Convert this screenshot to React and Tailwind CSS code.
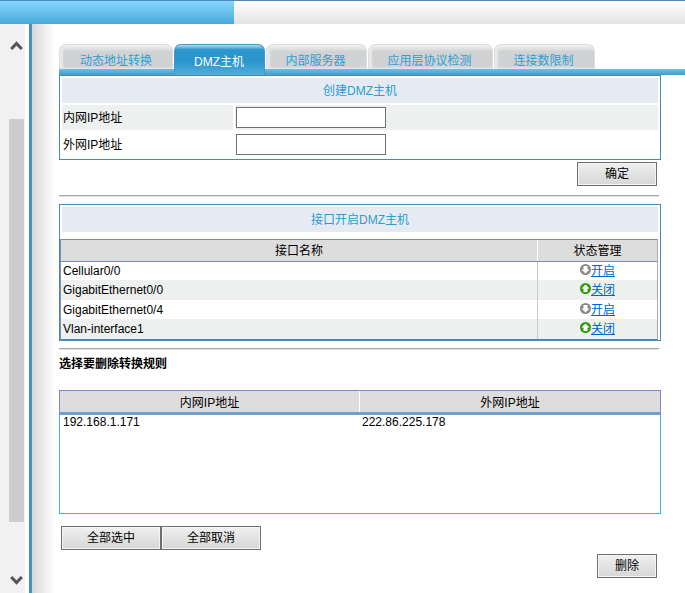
const font = { fontFamily: '"Liberation Sans", "Noto Sans CJK SC", sans-serif' };

const tabs = [
  { label: '动态地址转换', width: 'w-[114px]' },
  { label: 'DMZ主机', width: 'w-[91px]', active: true },
  { label: '内部服务器', width: 'w-[101px]', inset: 'pr-[2px]' },
  { label: '应用层协议检测', width: 'w-[125px]', inset: 'pr-[2px]' },
  { label: '连接数限制', width: 'w-[101px]', inset: 'pr-[2px]' },
];

const interfaces = [
  { name: 'Cellular0/0', on: false, h: 'h-[18px]' },
  { name: 'GigabitEthernet0/0', on: true, h: 'h-[20px]', alt: true },
  { name: 'GigabitEthernet0/4', on: false, h: 'h-[19px]' },
  { name: 'Vlan-interface1', on: true, h: 'h-[20px]', alt: true },
];

function StatusIcon({ on }) {
  return (
    <svg width="11" height="11" viewBox="0 0 11 11" className="shrink-0 -mt-[3px]">
      <circle cx="5.5" cy="5.5" r="5.5" fill={on ? '#2f9a0c' : '#888888'} />
      {on
        ? <path d="M5.5 1.5 L9.5 5.5 H7.5 V9 H3.5 V5.5 H1.5 Z" fill="#fff" />
        : <path d="M5.5 9.5 L9.5 5.5 H7.5 V2 H3.5 V5.5 H1.5 Z" fill="#fff" />}
    </svg>
  );
}

function GrayButton({ children, className = '' }) {
  return (
    <button className={`h-[24px] border border-[#6f6f6f] bg-gradient-to-b from-[#f0f0f0] to-[#d6d6d6] shadow-[inset_0_0_0_1px_#f4f4f4] text-xs text-black ${className}`}>
      {children}
    </button>
  );
}

function PanelTitle({ children }) {
  return (
    <div className="h-[25px] bg-[#e6eaf2] flex items-center justify-center text-xs text-[#2b9dd2]">
      {children}
    </div>
  );
}

function Divider() {
  return <div className="w-[600px] h-[2px] bg-[#a8a8a8] border-b border-[#e4e4e4]" />;
}

export default function App() {
  return (
    <div className="w-[685px] h-[593px] overflow-hidden bg-white flex flex-col" style={font}>
      {/* Top bar */}
      <div className="h-[24px] shrink-0 flex border-t border-[#4f8cbd]">
        <div className="w-[234px] bg-gradient-to-b from-[#85d6fd] to-[#4aa9da]" />
        <div className="flex-1 bg-gradient-to-b from-white to-[#e4e4e4]" />
      </div>

      <div className="flex-1 flex min-h-0">
        {/* Scrollbar */}
        <div className="w-[25px] shrink-0 bg-[#f1f1f1] flex flex-col pl-[9px]">
          <div className="h-[95px] pt-[17px] pr-[1px] flex justify-center">
            <svg width="13" height="9" viewBox="0 0 13 9"><path d="M1.2 8 L6.5 2.4 L11.8 8" fill="none" stroke="#555" strokeWidth="3" /></svg>
          </div>
          <div className="w-[15px] h-[403px] bg-[#cdcdcd]" />
          <div className="h-[71px] pt-[54px] pr-[1px] flex justify-center">
            <svg width="13" height="9" viewBox="0 0 13 9"><path d="M1.2 1 L6.5 6.6 L11.8 1" fill="none" stroke="#555" strokeWidth="3" /></svg>
          </div>
        </div>

        {/* Splitter */}
        <div className="w-[4px] shrink-0 bg-white" />
        <div className="w-[3px] shrink-0 bg-[#4a8fba]" />
        <div className="w-[23px] shrink-0 bg-gradient-to-r from-[#d8d8d8] to-white" />
        <div className="w-[4px] shrink-0" />

        {/* Main */}
        <div className="flex-1 pt-[20px] text-xs text-black">
          {/* Tabs */}
          <div className="relative h-[31px] flex gap-px">
            <div className="absolute left-0 right-0 bottom-0 h-[6px] bg-gradient-to-b from-[#6cc0e8] to-[#3f9ccf]" />
            {tabs.map(t => (
              t.active ? (
                <div key={t.label} className={`relative ${t.width} h-[31px] rounded-t-[7px] border-t border-x border-[#4a97c4] bg-[linear-gradient(to_bottom,#b5dcf0_0%,#2a96cb_16%,#2a96cb_55%,#52aedb_100%)] text-white flex items-center justify-center pt-[3px] pr-[1px]`}>
                  {t.label}
                </div>
              ) : (
                <div key={t.label} className={`relative ${t.width} ${t.inset || ''} h-[25px] rounded-t-[7px] border-t border-x border-[#dedede] bg-[linear-gradient(to_bottom,#f4f4f4_0%,#d0d2d3_28%,#cfd1d2_88%,#e6e6e6_100%)] shadow-[inset_4px_0_2px_-1px_#e9e9e9] text-[#2f9fd6] flex items-center justify-center pt-[7px]`}>
                  {t.label}
                </div>
              )
            ))}
          </div>

          {/* Create DMZ */}
          <div className="w-[602px] border border-[#4a8ab0] p-[2px] flex flex-col gap-[2px]">
            <PanelTitle>创建DMZ主机</PanelTitle>
            <div className="h-[25px] flex gap-[2px]">
              <div className="w-[171px] bg-[#eef0ef] flex items-center pl-[1px]">内网IP地址</div>
              <div className="flex-1 bg-[#eef0ef] flex items-center pl-[1px]">
                <input className="w-[150px] h-[21px] bg-white border border-[#707070] outline-none" />
              </div>
            </div>
            <div className="h-[25px] flex gap-[2px]">
              <div className="w-[171px] flex items-center pl-[1px]">外网IP地址</div>
              <div className="flex-1 flex items-center pl-[1px]">
                <input className="w-[150px] h-[21px] bg-white border border-[#707070] outline-none" />
              </div>
            </div>
          </div>

          <div className="w-[602px] flex justify-end pr-[4px] pt-[2px] pb-[9px]">
            <GrayButton className="w-[80px]">确定</GrayButton>
          </div>
          <Divider />

          {/* Interfaces */}
          <div className="w-[602px] mt-[7px] border border-[#4a8ab0] pt-[2px] flex flex-col">
            <div className="px-[2px]"><PanelTitle>接口开启DMZ主机</PanelTitle></div>
            <div className="mt-[7px] mr-[2px] border-l border-r border-l-[#7f8bc0] border-r-[#aaaaaa] border-b border-b-[#4a8ab0]">
              <div className="h-[23px] flex bg-[#dddddd] border-y border-[#8088c0]">
                <div className="flex-1 flex items-center justify-center">接口名称</div>
                <div className="w-[120px] border-l border-white flex items-center justify-center">状态管理</div>
              </div>
              {interfaces.map(r => (
                <div key={r.name} className={`${r.h} flex ${r.alt ? 'bg-[#eef0ef]' : 'bg-white'}`}>
                  <div className="flex-1 flex items-center pl-[2px]">{r.name}</div>
                  <div className="w-[120px] border-l border-[#cccccc] flex items-center justify-center">
                    <StatusIcon on={r.on} />
                    <a href="#" className="text-[#0066cc] underline">{r.on ? '关闭' : '开启'}</a>
                  </div>
                </div>
              ))}
            </div>
          </div>

          <div className="mt-[7px]"><Divider /></div>
          <div className="h-[28px] flex items-center font-bold">选择要删除转换规则</div>

          {/* Rules */}
          <div className="w-[602px] mt-[12px] h-[124px] border-x border-b border-[#45aee0] flex flex-col">
            <div className="h-[25px] flex bg-[#dddddd] border border-[#8088c0] border-b-[3px] border-b-[#6f9fd0] -mx-px">
              <div className="w-[299px] flex items-center justify-center pt-[2px]">内网IP地址</div>
              <div className="flex-1 border-l border-white flex items-center justify-center pt-[2px]">外网IP地址</div>
            </div>
            <div className="flex leading-[14px]">
              <div className="w-[299px] pl-[3px]">192.168.1.171</div>
              <div className="flex-1 pl-[3px]">222.86.225.178</div>
            </div>
          </div>

          <div className="flex pl-[2px] pt-[12px]">
            <GrayButton className="w-[100px]">全部选中</GrayButton>
            <GrayButton className="w-[100px]">全部取消</GrayButton>
          </div>
          <div className="w-[602px] flex justify-end pr-[4px] pt-[4px]">
            <GrayButton className="w-[60px]">删除</GrayButton>
          </div>
        </div>
      </div>
    </div>
  );
}
